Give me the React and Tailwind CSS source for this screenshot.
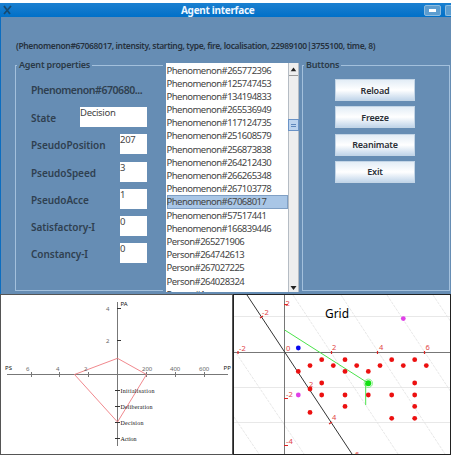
import { clsx } from "clsx";

const agents = [
  "Phenomenon#265772396",
  "Phenomenon#125747453",
  "Phenomenon#134194833",
  "Phenomenon#265536949",
  "Phenomenon#117124735",
  "Phenomenon#251608579",
  "Phenomenon#256873838",
  "Phenomenon#264212430",
  "Phenomenon#266265348",
  "Phenomenon#267103778",
  "Phenomenon#67068017",
  "Phenomenon#57517441",
  "Phenomenon#166839446",
  "Person#265271906",
  "Person#264742613",
  "Person#267027225",
  "Person#264028324",
  "Person#1",
];

const selected = "Phenomenon#67068017";

const fields = [
  { label: "State", value: "Decision", wide: true },
  { label: "PseudoPosition", value: "207" },
  { label: "PseudoSpeed", value: "3" },
  { label: "PseudoAcce", value: "1" },
  { label: "Satisfactory-I", value: "0" },
  { label: "Constancy-I", value: "0" },
];

const buttons = ["Reload", "Freeze", "Reanimate", "Exit"];

const redDots = [
  [321.7, 359.7], [345, 359.7], [391.7, 359.7], [414.7, 359.7],
  [310, 365.6], [333.3, 365.6], [356.7, 365.6], [380, 365.6], [403.3, 365.6], [426.3, 365.6],
  [298.3, 371.4], [345, 371.4], [368.3, 371.4],
  [321.7, 383], [414.7, 383],
  [310, 389],
  [321.7, 395], [345, 395], [368.3, 395], [391.7, 395], [414.7, 395],
  [345, 406.4], [414.7, 406.4],
  [310, 412.4],
  [391.7, 418.3], [414.7, 418.3],
];

const TitleBar = () => (
  <div className="flex h-[14px] shrink-0 items-center bg-linear-to-b from-[#1a80d0] to-[#0070c8]">
    <svg className="ml-[3px] h-[10px] w-[9px]" viewBox="0 0 9 10">
      <path d="M1 1L7 9M8 1L1 9" stroke="#174a70" strokeWidth="1.8" />
    </svg>
    <h1 className="ml-[169px] text-[10px] leading-[12px] font-bold tracking-[-0.3px] whitespace-nowrap text-[#eef7ff]">
      Agent interface
    </h1>
    <div className="ml-auto flex h-[11px] gap-[4px]">
      <div className="flex w-[17px] items-center justify-center rounded-[2px] border border-[#8dbcdf] bg-[#5c9dd0]">
        <span className="h-[3px] w-[7px] bg-white" />
      </div>
      <div className="w-[6px] rounded-l-[2px] border border-r-0 border-[#8dbcdf] bg-[#5c9dd0]" />
    </div>
  </div>
);

const Panel = ({ title, className, children }) => (
  <fieldset className={clsx("-mt-[5px] h-[232px] min-w-0 border border-[#a3c0dc]", className)}>
    <legend className="ml-[1px] px-[2px] text-[9px] leading-[12px] font-semibold tracking-[-0.2px] text-[#2a3946]">
      {title}
    </legend>
    {children}
  </fieldset>
);

const Properties = () => (
  <Panel title="Agent properties" className="w-[148px] border-r-0">
    <div className="flex flex-col pl-[15px]">
      <div className="mt-[12px] h-[24px] text-[10.5px] leading-[15px] font-semibold tracking-[-0.45px] text-[#2f4050]">
        Phenomenon#670680...
      </div>
      {fields.map((f) => (
        <div key={f.label} className="flex h-[27.3px] w-[116px] items-start justify-between">
          <label className="pt-[4px] text-[10px] leading-[15px] font-semibold tracking-[-0.05px] text-[#2f4050]">
            {f.label}
          </label>
          <div
            className={clsx(
              "h-[20px] bg-white text-[9.5px] leading-[12px] tracking-[-0.3px] text-[#444]",
              f.wide ? "w-[67px]" : "w-[27px]"
            )}
          >
            {f.value}
          </div>
        </div>
      ))}
    </div>
  </Panel>
);

const AgentList = () => (
  <div className="mt-[-1px] ml-[3px] flex h-[229px] w-[133px] bg-white">
    <ul className="flex-1 overflow-hidden pt-[0.5px] pl-[0.5px]">
      {agents.map((name) => (
        <li
          key={name}
          className={clsx(
            "h-[13.2px] text-[9.5px] leading-[13.2px] tracking-[-0.53px] text-[#444]",
            name === selected && "bg-[#a9c6e6] inset-shadow-[0_0_0_1px_#7f9fc4]"
          )}
        >
          {name}
        </li>
      ))}
    </ul>
    <div className="flex w-[11px] flex-col items-center border-x border-[#b5bcc4] bg-[#eeeeee]">
      <svg className="h-[13px] w-[9px] border-b border-[#999]" viewBox="0 0 9 13">
        <path d="M1.5 9L4.5 5L7.5 9Z" fill="#222" />
      </svg>
      <div className="mt-[43px] flex h-[12px] w-[11px] items-center justify-center border border-[#6b93c6] bg-[#bcd3ee]">
        <span className="h-[3px] w-[5px] border-y border-[#5f87bb]" />
      </div>
      <svg className="mt-auto h-[13px] w-[9px]" viewBox="0 0 9 13">
        <path d="M1.5 7L4.5 11L7.5 7Z" fill="#222" />
      </svg>
    </div>
  </div>
);

const Radar = () => (
  <svg className="block h-[159px] w-[231px]" viewBox="1 295 231 159">
    <g stroke="#777" strokeWidth="1">
      <path d="M117.5 302V446M7 374.5H228" />
      <path d="M31.5 372V377M59.5 372V377M88.5 372V377M146.5 372V377M175.5 372V377M204.5 372V377" />
      <path
        d="M117 308.5H121M117 340.5H121M115 390.5H120M115 406.5H120M115 422.5H120M115 438.5H120"
        stroke="#333"
      />
    </g>
    <path d="M117.5 358.3L146.5 374.5L117.5 422L74.5 374.5Z" fill="none" stroke="#ee7a80" strokeWidth="0.9" />
    <g fontSize="6" fill="#666">
      <text x="26" y="370.5">6</text>
      <text x="56" y="370.5">4</text>
      <text x="84" y="370.5">2</text>
      <text x="142" y="370.5">200</text>
      <text x="170" y="370.5">400</text>
      <text x="199" y="370.5">600</text>
      <text x="106" y="310.5">4</text>
      <text x="106" y="342.5">2</text>
    </g>
    <g fontSize="6" fill="#111">
      <text x="120.5" y="306">PA</text>
      <text x="5" y="370">PS</text>
      <text x="223.5" y="370">PP</text>
    </g>
    <g fontSize="6" fill="#111" className="font-['Liberation_Serif',serif]">
      <text x="120.5" y="392.5" textLength="34">Initialisation</text>
      <text x="120.5" y="408.5" textLength="32">Deliberation</text>
      <text x="120.5" y="424.5" textLength="23">Decision</text>
      <text x="120.5" y="440.5" textLength="16">Action</text>
    </g>
  </svg>
);

const Grid = () => (
  <svg className="block h-[159px] w-[216px]" viewBox="234 295 216 159">
    <g stroke="#e2e2e2" fill="none" strokeWidth="0.8">
      <path d="M234 316.5H451M234 387.5H451M234 422.5H451" />
      <path
        d="M234 350L304 454M234 417L259 454M293 295L398 454M341 295L445 454M387 295L451 392M433 295L451 322"
        strokeDasharray="3 1"
      />
    </g>
    <path d="M284.5 294V454M233 352.5H451" stroke="#777" />
    <path d="M247 295L352 454" stroke="#333" strokeWidth="1" />
    <path d="M284.7 330L368 383M365.7 383V405" stroke="#4be34b" fill="none" strokeWidth="1" />
    <g stroke="#d22" strokeWidth="1.2">
      <path d="M238 351V354M331.5 351V354M377.5 351V354M424.5 351V354" />
      <path d="M284 304.5H288M284 398.5H288M284 445.5H288M260 318L263 316M329 424L332 422" />
    </g>
    {redDots.map(([x, y]) => (
      <circle key={`${x}-${y}`} cx={x} cy={y} r="2.4" fill="#ec1010" />
    ))}
    <circle cx="298.3" cy="348" r="2.4" fill="#0808ee" />
    <circle cx="298.3" cy="395" r="2.4" fill="#e040e8" />
    <circle cx="403.3" cy="318.6" r="2.4" fill="#e040e8" />
    <circle cx="368.3" cy="383.3" r="4.2" fill="none" stroke="#6fec6f" strokeWidth="0.8" />
    <circle cx="368.3" cy="383.3" r="3" fill="#12e012" />
    <g fontSize="7.5" fill="#df4545">
      <text x="262" y="314.5">-2</text>
      <text x="239" y="350.5">-2</text>
      <text x="286" y="351">0</text>
      <text x="332" y="350">2</text>
      <text x="379" y="350">4</text>
      <text x="425.5" y="350">6</text>
      <text x="285.5" y="306">2</text>
      <text x="286" y="397">-2</text>
      <text x="286" y="443.5">-4</text>
      <text x="309" y="387">2</text>
      <text x="332" y="420">4</text>
      <text x="355" y="456.5">6</text>
    </g>
    <text x="325" y="317.5" fontSize="13" textLength="24" lengthAdjust="spacingAndGlyphs" fill="#000">
      Grid
    </text>
  </svg>
);

const App = () => {
  return (
    <div className="h-[458px] w-[456px] overflow-hidden bg-white pt-[3px] font-['Noto_Sans','Open_Sans',sans-serif]">
      <div className="flex h-[291px] w-[451px] flex-col overflow-hidden">
        <TitleBar />
        <div className="flex flex-1 flex-col border-l border-[#0b6dc0] bg-[#668db4]">
          <p className="mt-[23px] ml-[15px] h-[20px] text-[8.5px] leading-[12px] font-semibold tracking-[-0.35px] whitespace-nowrap text-[#26323e]">
            (Phenomenon#67068017, intensity, starting, type, fire, localisation, 22989100|3755100, time, 8)
          </p>
          <div className="flex pt-[4px] pl-[14px]">
            <Properties />
            <AgentList />
            <Panel title="Buttons" className="ml-[3px] w-[148px]">
              <div className="ml-[32px] flex flex-col gap-[5.3px] pt-[8px]">
                {buttons.map((b) => (
                  <button
                    key={b}
                    className="h-[22px] w-[80px] border border-[#c3d5e6] bg-linear-to-b from-[#e3edf6] via-white to-[#c2d6ea] text-[9px] leading-none font-semibold tracking-[-0.2px] text-[#2a2f36]"
                  >
                    {b}
                  </button>
                ))}
              </div>
            </Panel>
          </div>
        </div>
      </div>
      <div className="flex h-[161px] w-[451px]">
        <div className="w-[233px] overflow-hidden border border-[#555]">
          <Radar />
        </div>
        <div className="w-[218px] overflow-hidden border border-[#222]">
          <Grid />
        </div>
      </div>
    </div>
  );
};

export default App;
